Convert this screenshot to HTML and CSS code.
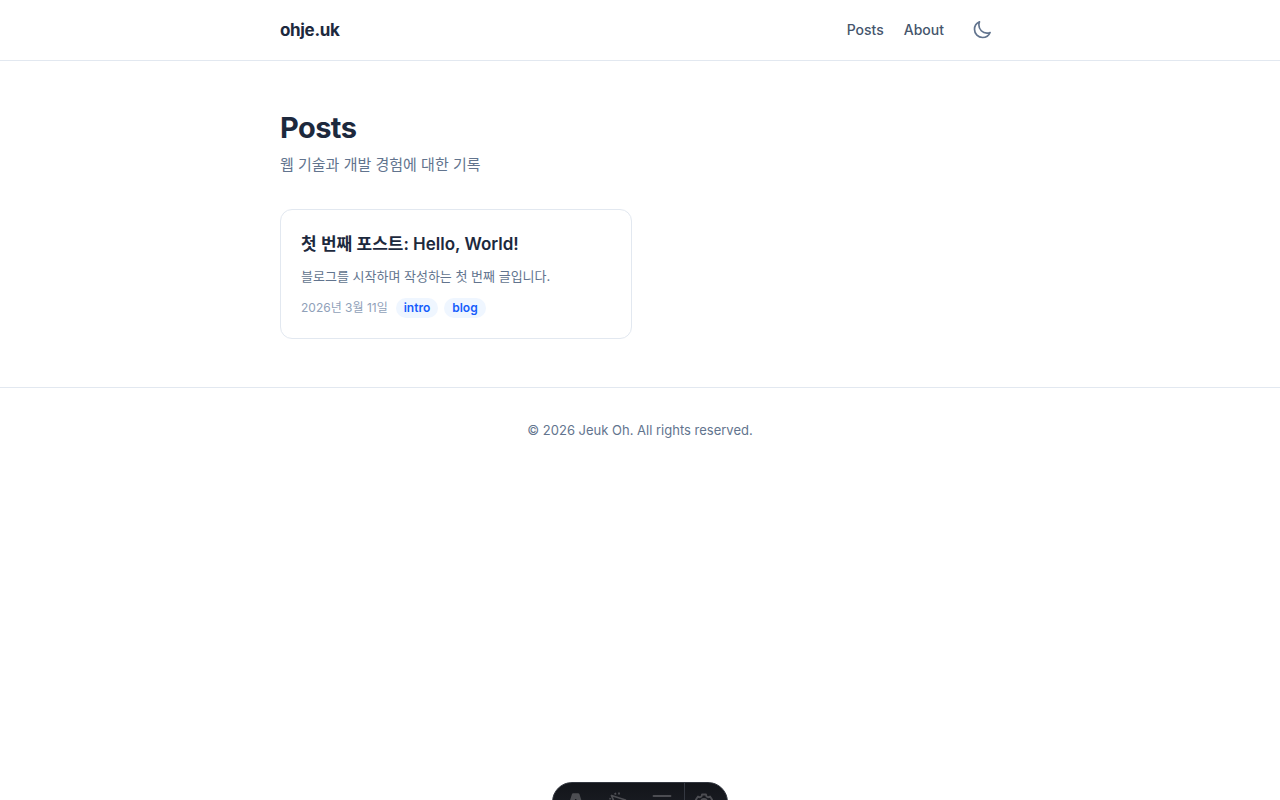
FILE: index.html
```html
<!DOCTYPE html>
<html lang="ko">
<head>
    <meta charset="UTF-8">
    <meta name="viewport" content="width=device-width, initial-scale=1.0">
    <title>Posts | ohje.uk</title>
    <link rel="stylesheet" href="styles.css">
</head>
<body>
    <header class="site-header">
        <div class="container header-inner">
            <a href="#" class="site-logo">ohje.uk</a>
            <nav class="site-nav">
                <a href="#">Posts</a>
                <a href="#">About</a>
                <button type="button" class="theme-toggle" aria-label="Toggle theme">
                    <svg viewBox="0 0 24 24" fill="none" stroke="currentColor" stroke-width="2" stroke-linecap="round" stroke-linejoin="round">
                        <path d="M21.752 15.002A9.72 9.72 0 0 1 18 15.75c-5.385 0-9.75-4.365-9.75-9.75 0-1.33.266-2.597.748-3.752A9.753 9.753 0 0 0 3 11.25C3 16.635 7.365 21 12.75 21a9.753 9.753 0 0 0 9.002-5.998Z"/>
                    </svg>
                </button>
            </nav>
        </div>
    </header>

    <main class="container">
        <h1>Posts</h1>
        <p class="description">웹 기술과 개발 경험에 대한 기록</p>

        <div class="post-grid">
            <a href="#" class="post-card">
                <h2>첫 번째 포스트: Hello, World!</h2>
                <p>블로그를 시작하며 작성하는 첫 번째 글입니다.</p>
                <div class="post-meta">
                    <time datetime="2026-03-11">2026년 3월 11일</time>
                    <div class="tags">
                        <span class="tag">intro</span>
                        <span class="tag">blog</span>
                    </div>
                </div>
            </a>
        </div>
    </main>

    <footer class="site-footer">
        <p>© 2026 Jeuk Oh. All rights reserved.</p>
    </footer>

    <!-- dev toolbar, tucked under the bottom edge -->
    <div class="dev-toolbar">
        <button type="button" aria-label="Menu">
            <svg viewBox="0 0 20 20" fill="currentColor">
                <path d="M7 2.100Q7.300 1.300 8.200 1.300h5q.9 0 1.200.8l4 12.500a14 14 0 0 0-4.800-1.500L11.200 7h-1L7.800 13.100a14 14 0 0 0-4.800 1.500zM6.200 14.800c2 1.500 6.600 1.500 8.700 0 .4 2-.8 3-2 4-.5-1.500-3.500-1.500-3.600.7-1.800-.8-3.500-2.500-3.100-4.700z"/>
            </svg>
        </button>
        <button type="button" aria-label="Inspect">
            <svg viewBox="0 0 20 20" fill="none" stroke="currentColor" stroke-width="1.800" stroke-linejoin="round">
                <path d="M2.500 3.500L16.500 8l-5.500 3-3 6zM6 .8l.7 1.800M10.300.5l-.6 2M.3 6.500l1.500.5"/>
            </svg>
        </button>
        <button type="button" aria-label="Audit">
            <svg viewBox="0 0 20 20" fill="none" stroke="currentColor" stroke-width="1.800" stroke-linecap="round">
                <path d="M1.500 4h17M1.500 10h7M1.500 16h7"/>
                <circle cx="14" cy="13" r="4"/>
                <path d="M17 16l2 2"/>
            </svg>
        </button>
        <button type="button" class="settings" aria-label="Settings">
            <svg viewBox="0 0 20 20" fill="none" stroke="currentColor" stroke-width="1.800" stroke-linejoin="round">
                <path d="M8 2.500h4l.5 2 1.500.8 2-.8 2.200 3.200-1.600 1.500v1.600l1.600 1.500-2.200 3.200-2-.8-1.500.8-.5 2H8l-.5-2-1.500-.8-2 .8-2.200-3.200 1.600-1.500V9.200L1.800 7.700 4 4.500l2 .8 1.500-.8z"/>
                <circle cx="10" cy="10" r="3"/>
            </svg>
        </button>
    </div>
</body>
</html>
```
FILE: styles.css
```css
* {
    box-sizing: border-box;
    margin: 0;
    padding: 0;
}

body {
    font-family: Inter, 'Noto Sans CJK KR', sans-serif;
    font-size: 15px;
    line-height: 28px;
    color: #1d293d;
    background: #fff;
}

a {
    color: inherit;
    text-decoration: none;
}

.container {
    max-width: 760px;
    margin: 0 auto;
    padding: 0 20px;
}

.site-header {
    border-bottom: 1px solid #e2e8f0;
}

.header-inner {
    display: flex;
    align-items: center;
    justify-content: space-between;
    height: 60px;
}

.site-logo {
    font-size: 17px;
    font-weight: 700;
    letter-spacing: -0.02em;
}

.site-nav {
    display: flex;
    align-items: center;
    gap: 20px;
    font-size: 14px;
    font-weight: 500;
    color: #45556c;
}

.theme-toggle {
    display: flex;
    align-items: center;
    justify-content: center;
    width: 36px;
    height: 36px;
    border: none;
    background: transparent;
    color: #62748e;
    cursor: pointer;
}

.theme-toggle svg {
    width: 20px;
    height: 20px;
}

main.container {
    padding-top: 48px;
    padding-bottom: 48px;
}

h1 {
    font-size: 29px;
    line-height: 38px;
    font-weight: 700;
    letter-spacing: -0.02em;
    margin-bottom: 4px;
}

.description {
    color: #62748e;
    margin-bottom: 30px;
}

.post-grid {
    display: grid;
    grid-template-columns: repeat(2, 1fr);
    gap: 16px;
}

.post-card {
    padding: 20px;
    border: 1px solid #e2e8f0;
    border-radius: 12px;
}

.post-card h2 {
    font-size: 17px;
    line-height: 28px;
    font-weight: 600;
    margin-bottom: 8px;
}

.post-card p {
    font-size: 13px;
    line-height: 20px;
    color: #62748e;
    margin-bottom: 12px;
}

.post-meta {
    display: flex;
    align-items: center;
    gap: 8px;
    font-size: 12px;
    line-height: 20px;
    color: #90a1b9;
}

.tags {
    display: flex;
    gap: 6px;
}

.tag {
    padding: 0 8px;
    border-radius: 10px;
    background: #eff6ff;
    color: #155dfc;
    font-weight: 600;
}

.site-footer {
    border-top: 1px solid #e2e8f0;
    padding: 28px 20px;
    text-align: center;
    font-size: 13px;
    color: #62748e;
}

.dev-toolbar {
    position: fixed;
    left: 50%;
    bottom: -22px;
    transform: translateX(-50%);
    display: flex;
    width: 176px;
    height: 40px;
    overflow: hidden;
    border: 1px solid #343841;
    border-radius: 20px;
    background: linear-gradient(180deg, #13151a, #1d2027);
}

.dev-toolbar button {
    display: flex;
    align-items: center;
    justify-content: center;
    flex: 1;
    border: none;
    background: transparent;
    color: #4c4d52;
}

.dev-toolbar .settings {
    flex: 0 0 43px;
    padding-right: 4px;
    border-left: 1px solid #343841;
}

.dev-toolbar svg {
    width: 20px;
    height: 20px;
}
```
